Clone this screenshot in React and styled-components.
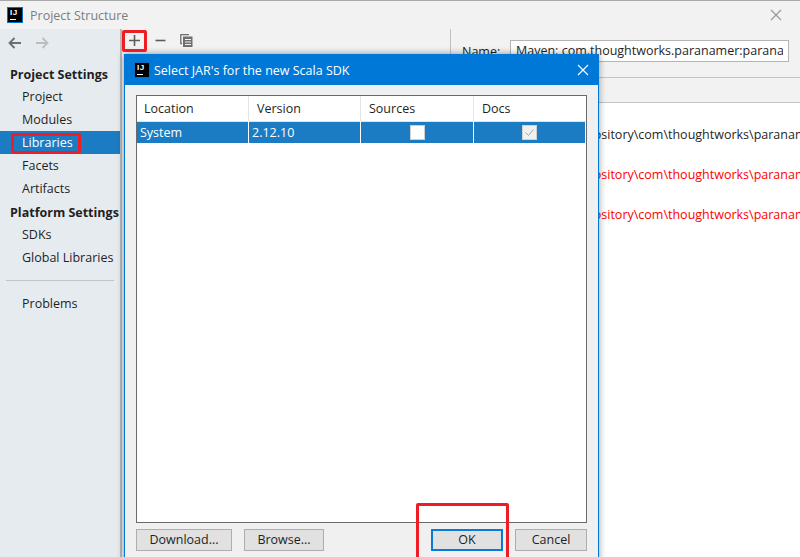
import React from 'react';
import styled, { createGlobalStyle } from 'styled-components';

const GlobalStyle = createGlobalStyle`
  html, body { margin: 0; padding: 0; background: #f2f2f2; }
  body { font-family: "Open Sans", "Noto Sans", sans-serif; font-size: 12.5px; color: #1f1f1f; }
`;

const sideItems = [
  { label: 'Project Settings', heading: true },
  { label: 'Project' },
  { label: 'Modules' },
  { label: 'Libraries', selected: true },
  { label: 'Facets' },
  { label: 'Artifacts' },
  { label: 'Platform Settings', heading: true },
  { label: 'SDKs' },
  { label: 'Global Libraries' }
];

const classPath = 'repository\\com\\thoughtworks\\paranamer\\paranamer\\2.8\\paranamer-2.8.jar';
const classRows = [
  { id: 'classes', missing: false },
  { id: 'sources', missing: true },
  { id: 'docs', missing: true }
];

const IjLogo = function () {
  return (
    <LogoBox>
      <LogoLetters>IJ</LogoLetters>
      <LogoBar />
    </LogoBox>
  );
};

const CloseIcon = function ({ color }) {
  return (
    <svg width="12" height="12" viewBox="0 0 12 12">
      <path d="M1 1l10 10M11 1L1 11" stroke={color} strokeWidth="1.2" fill="none" />
    </svg>
  );
};

const ArrowIcon = function ({ color, flip }) {
  return (
    <svg width="14" height="12" viewBox="0 0 14 12" style={flip ? { transform: 'scaleX(-1)' } : undefined}>
      <path d="M1.5 6H13M6.5 1L1.5 6l5 5" stroke={color} strokeWidth="1.8" fill="none" />
    </svg>
  );
};

const CopyIcon = function () {
  return (
    <svg width="13" height="13" viewBox="0 0 13 13">
      <path d="M3 .5H.8v9H2M3 .5h6" stroke="#6e6e6e" strokeWidth="1.3" fill="none" />
      <path d="M3 2.5h9.5V13H3z" fill="#6e6e6e" />
      <path d="M5 5.5h6M5 8h6M5 10.5h6" stroke="#f2f2f2" strokeWidth="1" />
    </svg>
  );
};

const App = function () {
  return (
    <Window>
      <GlobalStyle />
      <TitleBar>
        <IjLogo />
        <WindowTitle>Project Structure</WindowTitle>
        <WindowClose><CloseIcon color="#9a9a9a" /></WindowClose>
      </TitleBar>

      <Body>
        <Sidebar>
          <NavRow>
            <ArrowIcon color="#6e6e6e" />
            <ArrowIcon color="#bdbdbd" flip />
          </NavRow>
          {sideItems.map((item) => (
            <SideItem key={item.label} $heading={item.heading} $selected={item.selected}>
              {item.label}
            </SideItem>
          ))}
          <SideDivider />
          <SideItem>Problems</SideItem>
        </Sidebar>

        <MiddlePane>
          <Toolbar>
            <ToolGlyph>
              <svg width="13" height="13" viewBox="0 0 13 13">
                <path d="M6.5 1v11M1 6.5h11" stroke="#5c5c5c" strokeWidth="1.6" />
              </svg>
            </ToolGlyph>
            <ToolGlyph>
              <svg width="13" height="13" viewBox="0 0 13 13">
                <path d="M1.5 6.5h10" stroke="#5c5c5c" strokeWidth="1.6" />
              </svg>
            </ToolGlyph>
            <ToolGlyph><CopyIcon /></ToolGlyph>
          </Toolbar>
        </MiddlePane>

        <DetailPane>
          <NameRow>
            <NameLabel>Name:</NameLabel>
            <NameInput>
              <NameValue>Maven: com.thoughtworks.paranamer:paranamer:2.8</NameValue>
            </NameInput>
          </NameRow>
          <TabStrip />
          <ClassList>
            {classRows.map((row) => (
              <ClassRow key={row.id} $missing={row.missing}>{classPath}</ClassRow>
            ))}
          </ClassList>
        </DetailPane>
      </Body>

      <Dialog>
        <DialogTitle>
          <IjLogo />
          <DialogCaption>Select JAR's for the new Scala SDK</DialogCaption>
          <DialogClose><CloseIcon color="#ffffff" /></DialogClose>
        </DialogTitle>
        <DialogBody>
          <Table>
            <TableRow $height={25}>
              <HeadCell>Location</HeadCell>
              <HeadCell>Version</HeadCell>
              <HeadCell>Sources</HeadCell>
              <HeadCell $last>Docs</HeadCell>
            </TableRow>
            <SelectedRow>
              <DataCell>System</DataCell>
              <DataCell>2.12.10</DataCell>
              <DataCell $center><CheckBox /></DataCell>
              <DataCell $center $last>
                <CheckBox $checked>
                  <svg width="11" height="11" viewBox="0 0 11 11">
                    <path d="M1.5 5.5l3 3 5-6" stroke="#a8a8a8" strokeWidth="1" fill="none" />
                  </svg>
                </CheckBox>
              </DataCell>
            </SelectedRow>
          </Table>
          <ButtonRow>
            <ButtonGroup>
              <DialogButton $width={96}>Download...</DialogButton>
              <DialogButton $width={80}>Browse...</DialogButton>
            </ButtonGroup>
            <ButtonGroup>
              <DialogButton $width={72} $primary>OK</DialogButton>
              <DialogButton $width={72}>Cancel</DialogButton>
            </ButtonGroup>
          </ButtonRow>
        </DialogBody>
      </Dialog>

      <Marker $left={122} $top={29} $width={25} $height={22} />
      <Marker $left={11} $top={132} $width={70} $height={21} />
      <Marker $left={416} $top={502} $width={93} $height={60} />
    </Window>
  );
};

const Window = styled.div`
  position: relative;
  display: flex;
  flex-direction: column;
  width: 800px;
  height: 557px;
  overflow: hidden;
  background: #f2f2f2;
  border-top: 1px solid #a8a8a8;
  box-sizing: border-box;`;

const TitleBar = styled.div`
  display: flex;
  align-items: center;
  flex: none;
  height: 28px;
  padding: 0 18px 0 7px;
  background: #f2f2f2;`;

const LogoBox = styled.div`
  position: relative;
  flex: none;
  width: 16px;
  height: 16px;
  background: #000;
  border: 1px solid #0a6fc2;
  box-sizing: border-box;`;

const LogoLetters = styled.span`
  position: absolute;
  top: 0;
  left: 2px;
  color: #fff;
  font-family: "Liberation Sans", sans-serif;
  font-size: 8px;
  font-weight: 700;
  line-height: 9px;
  letter-spacing: 0.5px;`;

const LogoBar = styled.span`
  position: absolute;
  left: 2px;
  bottom: 2px;
  width: 6px;
  height: 1px;
  background: #fff;`;

const WindowTitle = styled.div`
  margin-left: 7px;
  color: #7d7d7d;`;

const WindowClose = styled.div`
  display: flex;
  margin-left: auto;`;

const Body = styled.div`
  display: flex;
  flex: 1;
  min-height: 0;`;

const Sidebar = styled.div`
  flex: none;
  width: 120px;
  background: #e6ebf0;
  border-right: 2px solid #b9b9b9;`;

const NavRow = styled.div`
  display: flex;
  align-items: center;
  gap: 13px;
  height: 28px;
  padding-left: 8px;
  margin-bottom: 5px;`;

const SideItem = styled.div`
  height: 23px;
  padding-left: ${ (props) => (props.$heading ? '10px' : '22px') };
  font-weight: ${ (props) => (props.$heading ? 700 : 400) };
  line-height: ${ (props) => (props.$heading ? '25px' : '23px') };
  white-space: nowrap;
  color: ${ (props) => (props.$selected ? '#fff' : '#1f1f1f') };
  background: ${ (props) => (props.$selected ? '#1b7cc4' : 'transparent') };`;

const SideDivider = styled.div`
  height: 1px;
  margin: 11px 6px 11px 6px;
  background: #c4c4c4;`;

const MiddlePane = styled.div`
  flex: none;
  width: 328px;
  border-right: 1px solid #c0c0c0;`;

const Toolbar = styled.div`
  display: flex;
  align-items: center;
  gap: 6px;
  height: 22px;
  padding-left: 2px;`;

const ToolGlyph = styled.div`
  display: flex;
  align-items: center;
  justify-content: center;
  width: 20px;
  height: 20px;`;

const DetailPane = styled.div`
  display: flex;
  flex: 1;
  flex-direction: column;
  min-width: 0;`;

const NameRow = styled.div`
  display: flex;
  align-items: center;
  flex: none;
  height: 49px;
  padding: 0 11px 4px 11px;
  border-bottom: 1px solid #c4c4c4;
  box-sizing: border-box;`;

const NameLabel = styled.div`
  width: 48px;
  flex: none;`;

const NameInput = styled.div`
  flex: 1;
  min-width: 0;
  height: 22px;
  padding: 0 5px;
  border: 1px solid #b4b4b4;
  background: #fff;
  line-height: 20px;
  box-sizing: border-box;`;

const NameValue = styled.div`
  white-space: nowrap;
  overflow: hidden;`;

const TabStrip = styled.div`
  flex: none;
  height: 25px;
  border-bottom: 1px solid #c4c4c4;
  box-sizing: border-box;`;

const ClassList = styled.div`
  flex: 1;
  padding-top: 12px;
  background: #fff;`;

const ClassRow = styled.div`
  height: 40px;
  padding-left: 123px;
  line-height: 40px;
  white-space: nowrap;
  overflow: hidden;
  color: ${ (props) => (props.$missing ? '#ff0000' : '#1f1f1f') };`;

const Dialog = styled.div`
  position: absolute;
  left: 124px;
  top: 53px;
  display: flex;
  flex-direction: column;
  width: 475px;
  height: 530px;
  border: 1px solid #0078d7;
  background: #f0f0f0;
  box-shadow: 0 0 7px rgba(0, 0, 0, 0.4);
  box-sizing: border-box;`;

const DialogTitle = styled.div`
  display: flex;
  align-items: center;
  flex: none;
  height: 30px;
  padding: 0 9px 0 9px;
  background: #0078d7;`;

const DialogCaption = styled.div`
  margin-left: 4px;
  color: #fff;`;

const DialogClose = styled.div`
  display: flex;
  margin-left: auto;`;

const DialogBody = styled.div`
  display: flex;
  flex: 1;
  flex-direction: column;
  padding: 10px 11px 0 11px;`;

const Table = styled.div`
  flex: none;
  height: 428px;
  border: 1px solid #6a6a6a;
  background: #fff;
  box-sizing: border-box;`;

const TableRow = styled.div`
  display: grid;
  grid-template-columns: 112px 112px 113px 1fr;
  height: ${ (props) => props.$height }px;`;

const SelectedRow = styled(TableRow)`
  height: 22px;
  margin: 0 1px 0 0;
  background: #1b7cc4;
  color: #fff;`;

const HeadCell = styled.div`
  padding-left: 8px;
  line-height: 25px;
  border-right: ${ (props) => (props.$last ? 'none' : '1px solid #e4e4e4') };
  border-bottom: 1px solid #e4e4e4;
  &:first-child { padding-left: 7px; }`;

const DataCell = styled.div`
  display: flex;
  align-items: center;
  justify-content: ${ (props) => (props.$center ? 'center' : 'flex-start') };
  padding-left: ${ (props) => (props.$center ? '0' : '3px') };
  border-right: ${ (props) => (props.$last ? 'none' : '1px solid #fff') };`;

const CheckBox = styled.div`
  display: flex;
  align-items: center;
  justify-content: center;
  width: 13px;
  height: 13px;
  background: ${ (props) => (props.$checked ? '#f0f0f0' : '#fff') };
  border: 1px solid #d0d0d0;`;

const ButtonRow = styled.div`
  display: flex;
  justify-content: space-between;
  margin-top: 6px;`;

const ButtonGroup = styled.div`
  display: flex;
  gap: 12px;`;

const DialogButton = styled.div`
  width: ${ (props) => props.$width }px;
  height: 22px;
  border: ${ (props) => (props.$primary ? '2px solid #0a7ad6' : '1px solid #adadad') };
  background: #e1e1e1;
  text-align: center;
  line-height: ${ (props) => (props.$primary ? '18px' : '20px') };
  box-sizing: border-box;`;

const Marker = styled.div`
  position: absolute;
  left: ${ (props) => props.$left }px;
  top: ${ (props) => props.$top }px;
  width: ${ (props) => props.$width }px;
  height: ${ (props) => props.$height }px;
  border: 3px solid #ee1c25;
  border-radius: 2px;
  box-sizing: border-box;`;

export default App;
